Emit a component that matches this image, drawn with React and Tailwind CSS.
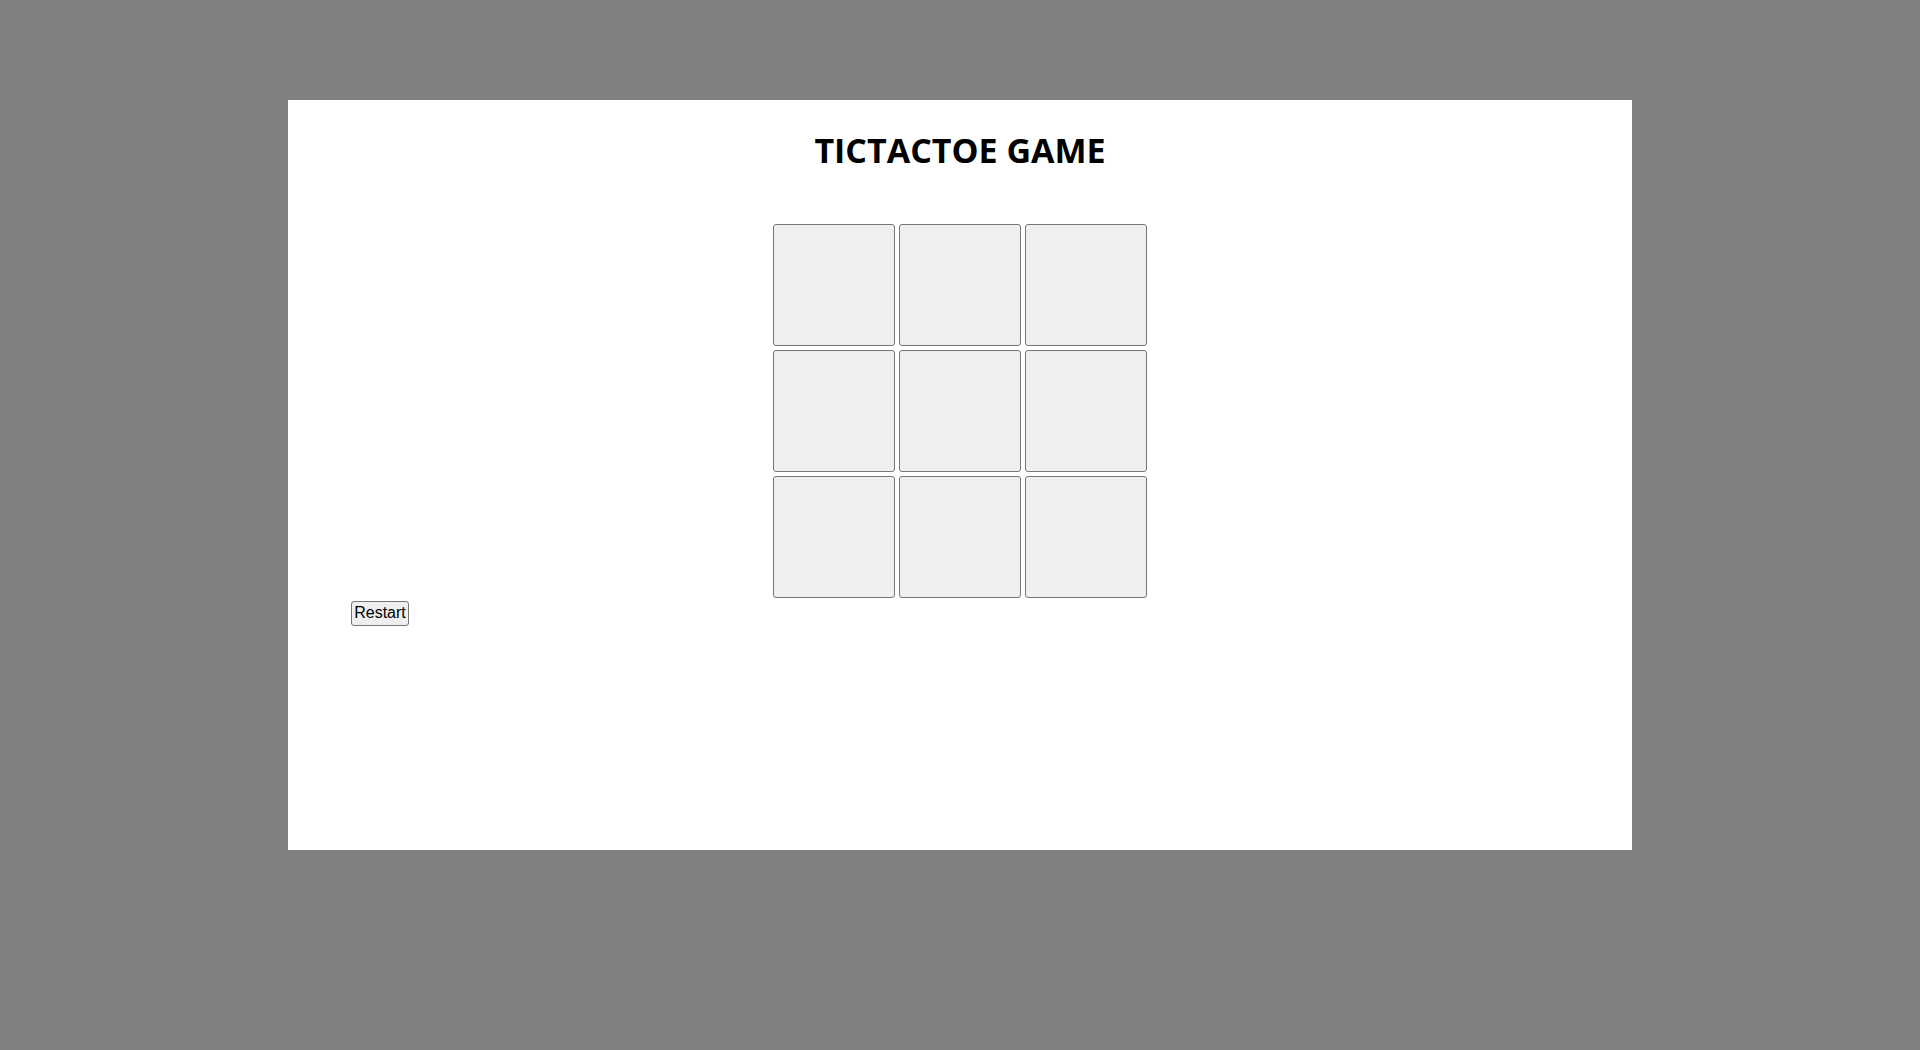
import { useState } from "react";

const EMPTY = Array(9).fill("");

export default function App() {
    const [cells, setCells] = useState(EMPTY);
    const [turn, setTurn] = useState("X");

    const play = (i) => {
        if (cells[i]) return;
        const next = [...cells];
        next[i] = turn;
        setCells(next);
        setTurn(turn === "X" ? "O" : "X");
    };

    const restart = () => {
        setCells(EMPTY);
        setTurn("X");
    };

    return (
        <div className="min-h-screen bg-[#808080] pt-[100px]">
            <div className="mx-auto w-[1344px] h-[750px] bg-white pt-[27px] flex flex-col">
                <h1 className="text-center text-[34px] font-bold text-black leading-[46px] [font-family:'Open_Sans',sans-serif]">
                    TICTACTOE GAME
                </h1>
                <div className="mt-[51px] mx-auto grid grid-cols-[repeat(3,122px)] gap-[4px]">
                    {cells.map((c, i) => (
                        <button
                            key={i}
                            onClick={() => play(i)}
                            className="w-[122px] h-[122px] bg-[#efefef] border border-[#767676] rounded-[3px] text-[48px] [font-family:'Liberation_Sans',Arial,sans-serif]"
                        >
                            {c}
                        </button>
                    ))}
                </div>
                <div className="pl-[63px] mt-[2px]">
                    <button
                        onClick={restart}
                        className="w-[58px] h-[25px] bg-[#efefef] border border-[#767676] rounded-[3px] text-[16px] leading-[18px] text-black [font-family:'Liberation_Sans',Arial,sans-serif]"
                    >
                        Restart
                    </button>
                </div>
            </div>
        </div>
    );
}
